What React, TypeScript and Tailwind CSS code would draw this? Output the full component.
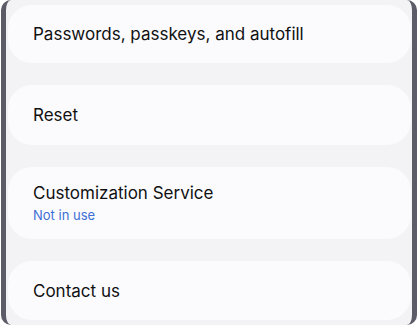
import React from 'react';

type Item = { title: string; sub?: string; h: string };

const items: Item[] = [
  { title: 'Passwords, passkeys, and autofill', h: 'h-[58px]' },
  { title: 'Reset', h: 'h-[60px]' },
  { title: 'Customization Service', sub: 'Not in use', h: 'h-[72px]' },
  { title: 'Contact us', h: 'h-[59px]' },
];

export default function App() {
  return (
    <div className="w-[420px] h-[325px] bg-white pl-[1px] pr-[3px] overflow-hidden" style={{ fontFamily: 'Inter, Roboto, sans-serif' }}>
      <div className="h-full border-x-[5px] border-[#5c5c68] rounded-[10px] bg-[#f3f3f5] pl-[2px] pr-[1px] pt-[5px] flex flex-col gap-[22px]">
        {items.map((it) => (
          <div key={it.title} className={`${it.h} shrink-0 rounded-[24px] bg-[#fbfbfd] px-[25px] flex flex-col justify-center`}>
            <span className="text-[17px] leading-[22px] text-[#111111]">{it.title}</span>
            {it.sub && <span className="text-[13px] leading-[17px] text-[#3d6fd6] mt-[3px]">{it.sub}</span>}
          </div>
        ))}
      </div>
    </div>
  );
}
